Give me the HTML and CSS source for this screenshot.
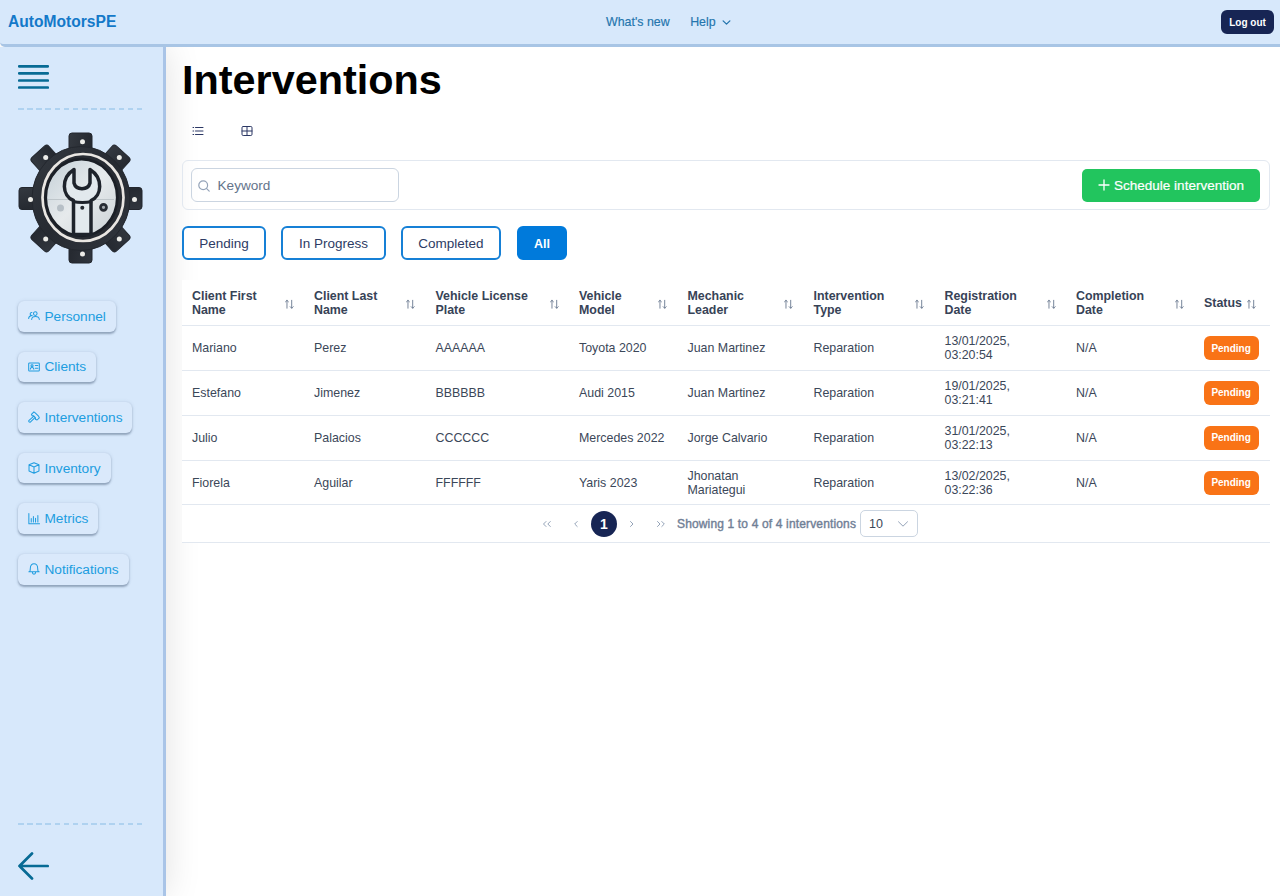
FILE: index.html
```html
<!DOCTYPE html>
<html lang="en">
<head>
<meta charset="utf-8">
<title>AutoMotorsPE</title>
<link rel="stylesheet" href="styles.css">
</head>
<body>
<svg class="defs" width="0" height="0">
  <symbol id="sort" viewBox="0 0 12 12"><path d="M3.400 10.500v-9M1.700 3.200l1.700-1.700 1.700 1.700M8.800 1.500v9M7.100 8.800l1.700 1.700 1.700-1.700"/></symbol>
  <symbol id="chev" viewBox="0 0 12 12"><path d="M1.500 3.800L6 8.200l4.500-4.400"/></symbol>
</svg>
<header class="topbar">
  <a class="brand">AutoMotorsPE</a>
  <nav class="topnav"><a>What's new</a><a>Help <svg class="icon help-chev"><use href="#chev"/></svg></a></nav>
  <button class="logout">Log out</button>
</header>
<div class="layout">
  <aside class="sidebar">
    <svg class="burger" viewBox="0 0 31 26"><path d="M1.200 2.300h28.600M1.200 9.300h28.600M1.200 16.500h28.600M1.200 23.500h28.600"/></svg>
    <div class="dashes"></div>
    <svg class="logo" viewBox="0 0 126 134">
      <defs>
        <linearGradient id="steel" x1="0" y1="0" x2="1" y2="1"><stop offset="0" stop-color="#343940"/><stop offset=".5" stop-color="#262a31"/><stop offset="1" stop-color="#31363e"/></linearGradient>
        <linearGradient id="face" x1="0" y1="0" x2="1" y2="1"><stop offset="0" stop-color="#c3cfd7"/><stop offset=".5" stop-color="#e6eaec"/><stop offset="1" stop-color="#cbd2d6"/></linearGradient>
      </defs>
      <g fill="url(#steel)" stroke="#23272e" stroke-width="1">
        <rect x="51" y="1" width="23" height="130" rx="3"/>
        <rect x="1" y="55.500" width="123" height="22" rx="3"/>
        <rect x="51" y="3.500" width="23" height="126" rx="3" transform="rotate(42 62.500 66.500)"/>
        <rect x="51" y="3.500" width="23" height="126" rx="3" transform="rotate(-42 62.500 66.500)"/>
        <ellipse cx="63" cy="66.500" rx="49" ry="52"/>
      </g>
      <ellipse cx="65" cy="65.500" rx="40.500" ry="43.500" fill="#272b32" stroke="#e9e6e2" stroke-width="2.700"/>
      <ellipse cx="63.500" cy="65.500" rx="35.800" ry="38.300" fill="url(#face)" stroke="#1b1f26" stroke-width="2.800"/>
      <path d="M30 67.500h66" stroke="#b2babf" stroke-width=".7"/>
      <path d="M55.500 102.500V68.500C44 64 42.500 46 56 37.500V51c2 7.500 14 7.500 16 0V37.500C85.500 46 84 64 73 68.500V102.500z" fill="#e2e9ed" stroke="#1e232b" stroke-width="3.500" stroke-linejoin="round"/>
      <path d="M54.500 69.500q10 2 19.500 0" fill="none" stroke="#1e232b" stroke-width="3.200"/>
      <circle cx="64.300" cy="75.700" r="2" fill="#242930"/>
      <circle cx="42.500" cy="76" r="3.500" fill="#9faab4" opacity=".65"/>
      <circle cx="85.500" cy="75.300" r="3" fill="#a2a8ad" stroke="#272c33" stroke-width="2.700"/>
      <g fill="#ecece8"><circle cx="64.500" cy="9.700" r="2.500"/><circle cx="64.500" cy="122" r="2.500"/><circle cx="12.500" cy="67.500" r="2.500"/><circle cx="116.500" cy="67.500" r="2.500"/><circle cx="27.700" cy="25.500" r="2.500"/><circle cx="101.300" cy="25.500" r="2.500"/><circle cx="27.700" cy="107" r="2.500"/><circle cx="101.300" cy="107" r="2.500"/></g>
    </svg>
    <nav class="menu">
      <a><svg class="icon" viewBox="0 0 14 14"><circle cx="8.500" cy="4.200" r="2.100"/><path d="M4.300 11c.3-4.500 8.400-4.500 8.900 0M4.500 3a1.700 1.700 0 1 0 .3 3.300M.8 10c0-2.300 1.200-3.200 3-3.300"/></svg>Personnel</a>
      <a><svg class="icon" viewBox="0 0 14 14"><rect x=".8" y="2.300" width="12.400" height="9.400" rx="1"/><circle cx="4.700" cy="5.500" r="1.200"/><path d="M2.600 9.500c.2-2.400 4-2.400 4.200 0M8.500 5.300h3M8.500 8.500h3"/></svg>Clients</a>
      <a><svg class="icon" viewBox="0 0 14 14"><path d="M4 3.900L6.900 1l1.500 1.100 3.900 3.900.9 1.900-2.600 2.600-2-.9.200-1.600-2.400-2.500-1.600.1zM6.200 6.500L.9 11.300q-.2 2 1.800 1.700l5.100-5"/></svg>Interventions</a>
      <a><svg class="icon" viewBox="0 0 14 14"><path d="M7 .9l5.800 2.300v7.300L7 13.100l-5.800-2.600V3.200zM1.300 3.300L7 5.900l5.700-2.600M7 5.900v7.200"/></svg>Inventory</a>
      <a><svg class="icon" viewBox="0 0 14 14"><path d="M1 .7v11.800h12.500M3.800 6.500v4M6.300 4v6.500M8.800 6v4.500M11.500 2.800v7.700"/></svg>Metrics</a>
      <a><svg class="icon" viewBox="0 0 14 14"><path d="M1 10.300c1.700-.2 1.700-2 1.700-4C2.700 2.700 4.600.8 7 .8s4.300 1.900 4.300 5.500c0 2 0 3.800 1.700 4zM5 10.500c.2 3.500 3.800 3.500 4 0"/></svg>Notifications</a>
    </nav>
    <div class="side-foot">
      <div class="dashes"></div>
      <svg class="back" viewBox="0 0 31 28"><path d="M29.700 14H1.500M14 1.500L1.500 14 14 26.500"/></svg>
    </div>
  </aside>
  <main class="content">
    <h1>Interventions</h1>
    <div class="views">
      <svg class="icon" viewBox="0 0 12 12"><path d="M3.500 2.500h7.500M3.500 6h7.500M3.500 9.500h7.500M1 2.500h.7M1 6h.7M1 9.500h.7"/></svg>
      <svg class="icon" viewBox="0 0 12 12"><rect x="1" y="1.500" width="10" height="9" rx="1.200"/><path d="M6 1.500v9M1 6h10"/></svg>
    </div>
    <div class="toolbar">
      <label class="search"><svg class="icon" viewBox="0 0 12 12"><circle cx="5.200" cy="5.200" r="4.400"/><path d="M8.400 8.400l2.800 2.800"/></svg><span>Keyword</span></label>
      <button class="schedule"><svg class="icon" viewBox="0 0 12 12"><path d="M6 1v10M1 6h10"/></svg>Schedule intervention</button>
    </div>
    <div class="filters"><button class="f1">Pending</button><button class="f2">In Progress</button><button class="f3">Completed</button><button class="f4 active">All</button></div>
    <table>
      <colgroup><col class="c1"><col class="c2"><col class="c3"><col class="c4"><col class="c5"><col class="c6"><col class="c7"><col class="c8"><col class="c9"></colgroup>
      <thead><tr>
        <th><div>Client First<br>Name<svg class="icon"><use href="#sort"/></svg></div></th>
        <th><div>Client Last<br>Name<svg class="icon"><use href="#sort"/></svg></div></th>
        <th><div>Vehicle License<br>Plate<svg class="icon"><use href="#sort"/></svg></div></th>
        <th><div>Vehicle<br>Model<svg class="icon"><use href="#sort"/></svg></div></th>
        <th><div>Mechanic<br>Leader<svg class="icon"><use href="#sort"/></svg></div></th>
        <th><div>Intervention<br>Type<svg class="icon"><use href="#sort"/></svg></div></th>
        <th><div>Registration<br>Date<svg class="icon"><use href="#sort"/></svg></div></th>
        <th><div>Completion<br>Date<svg class="icon"><use href="#sort"/></svg></div></th>
        <th><div>Status<svg class="icon"><use href="#sort"/></svg></div></th>
      </tr></thead>
      <tbody>
        <tr><td>Mariano</td><td>Perez</td><td>AAAAAA</td><td>Toyota 2020</td><td>Juan Martinez</td><td>Reparation</td><td>13/01/2025,<br>03:20:54</td><td>N/A</td><td><span class="tag">Pending</span></td></tr>
        <tr><td>Estefano</td><td>Jimenez</td><td>BBBBBB</td><td>Audi 2015</td><td>Juan Martinez</td><td>Reparation</td><td>19/01/2025,<br>03:21:41</td><td>N/A</td><td><span class="tag">Pending</span></td></tr>
        <tr><td>Julio</td><td>Palacios</td><td>CCCCCC</td><td>Mercedes 2022</td><td>Jorge Calvario</td><td>Reparation</td><td>31/01/2025,<br>03:22:13</td><td>N/A</td><td><span class="tag">Pending</span></td></tr>
        <tr><td>Fiorela</td><td>Aguilar</td><td>FFFFFF</td><td>Yaris 2023</td><td>Jhonatan<br>Mariategui</td><td>Reparation</td><td>13/02/2025,<br>03:22:36</td><td>N/A</td><td><span class="tag">Pending</span></td></tr>
      </tbody>
    </table>
    <div class="pager">
      <span class="step"><svg class="icon" viewBox="0 0 12 12"><path d="M5 3.500L2.500 6 5 8.500M9.300 3.500L6.800 6l2.500 2.500"/></svg></span>
      <span class="step"><svg class="icon" viewBox="0 0 12 12"><path d="M7.200 3.500L4.700 6l2.500 2.500"/></svg></span>
      <span class="page">1</span>
      <span class="step"><svg class="icon" viewBox="0 0 12 12"><path d="M4.500 3.500L7 6 4.500 8.500"/></svg></span>
      <span class="step"><svg class="icon" viewBox="0 0 12 12"><path d="M2.500 3.500L5 6 2.500 8.500M6.800 3.500L9.300 6 6.800 8.500"/></svg></span>
      <span class="report">Showing 1 to 4 of 4 interventions</span>
      <span class="rows">10<svg class="icon"><use href="#chev"/></svg></span>
    </div>
  </main>
</div>
</body>
</html>
```
FILE: styles.css
```css
* { box-sizing: border-box; }
body { margin: 0; height: 896px; overflow: hidden; background: #fff; font-family: "Liberation Sans", Arial, sans-serif; color: #374357; display: flex; flex-direction: column; }
button { font-family: inherit; margin: 0; }
.defs { position: absolute; }
.icon { width: 12px; height: 12px; fill: none; stroke: currentColor; stroke-width: 1; stroke-linecap: round; stroke-linejoin: round; flex: none; }
.topbar { position: relative; z-index: 2; height: 47px; flex: none; padding: 0 6px 0 8px; background: #d7e8fb; border-bottom: 3px solid #a8c5e5; border-bottom-left-radius: 5px; display: grid; grid-template-columns: 598px auto 1fr; align-items: center; }
.brand { font-size: 15.600px; font-weight: bold; color: #1479c9; }
.topnav { display: flex; gap: 20.500px; font-size: 12.400px; color: #2475ad; -webkit-text-stroke: .15px #2475ad; }
.topnav a { display: flex; align-items: center; gap: 6px; }
.help-chev { width: 9px; height: 9px; stroke-width: 1.700; }
.logout { justify-self: end; width: 53px; height: 24px; padding: 0; border: 0; border-radius: 6px; background: #172554; color: #fff; font-size: 10px; font-weight: bold; }
.layout { display: flex; flex: 1; min-height: 0; }
.sidebar { width: 166px; flex: none; padding: 17px 20px 16px 18px; background: #d7e8fb; border-right: 3px solid #a9c4e7; box-shadow: 0 0 34px rgba(0,0,0,.12); display: flex; flex-direction: column; }
.burger { width: 31px; height: 26px; flex: none; fill: none; stroke: #076b95; stroke-width: 2.700; stroke-linecap: round; }
.dashes { flex: none; height: 2px; width: 125px; background: repeating-linear-gradient(90deg, #afd2f0 0 5.500px, transparent 5.500px 9.150px); }
.burger + .dashes { margin-top: 18px; }
.logo { width: 126px; height: 134px; margin-top: 22px; flex: none; }
.menu { margin-top: 35px; display: flex; flex-direction: column; align-items: flex-start; gap: 20px; }
.menu a { height: 30.600px; padding: 0 10px; display: flex; align-items: center; gap: 4.500px; border-radius: 6px; font-size: 13.700px; color: #209de0; background: #dae9fb; box-shadow: 0 1.500px 2px rgba(60,80,110,.42), 0 0 4px rgba(60,80,110,.1); letter-spacing: -.03px; }
.menu .icon { width: 12px; height: 12px; stroke-width: 1.200; }
.side-foot { margin-top: auto; }
.back { display: block; width: 31px; height: 28px; margin-top: 27px; fill: none; stroke: #076b95; stroke-width: 2.700; stroke-linecap: round; stroke-linejoin: round; }
.content { flex: 1; min-width: 0; padding: 9px 10px 0 16px; }
h1 { margin: 0; font-size: 41.400px; line-height: 48px; color: #000; }
.views { display: flex; gap: 37px; padding: 21px 10px 0; color: #2b3764; }
.views .icon { display: block; }
.toolbar { margin-top: 23px; height: 50px; padding: 0 9px 0 8px; border: 1px solid #e2e8f0; border-radius: 6px; display: flex; align-items: center; justify-content: space-between; }
.search { width: 208px; height: 34px; padding: 1px 6px 0; border: 1px solid #cbd5e1; border-radius: 6px; display: flex; align-items: center; gap: 7.500px; font-size: 13.600px; color: #64748b; }
.search .icon { color: #94a3b8; stroke-width: 1.200; }
.schedule { width: 178px; height: 33px; padding: 0; border: 0; border-radius: 5px; background: #22c55e; color: #fff; font-size: 13.500px; display: flex; align-items: center; justify-content: center; gap: 4px; -webkit-text-stroke: .2px #fff; }
.schedule .icon { stroke-width: 1.300; }
.filters { display: flex; gap: 15px; margin-top: 16px; }
.filters button { height: 34px; padding: 0; background: #fff; border: 2px solid #1680d6; border-radius: 6px; color: #2d3b64; font-size: 13.500px; }
.filters .f1 { width: 84px; }
.filters .f2 { width: 105px; }
.filters .f3 { width: 100px; }
.filters .f4 { width: 50px; margin-left: 1px; }
.filters .active { background: #007adb; border-color: #007adb; color: #fff; font-weight: bold; font-size: 12.500px; padding-top: 1px; }
table { width: 1088px; margin-top: 20px; border-collapse: separate; border-spacing: 0; table-layout: fixed; font-size: 12.400px; line-height: 14px; background: #fff; }
.c1 { width: 122px; }
.c2 { width: 121.500px; }
.c3 { width: 143.500px; }
.c4 { width: 108.500px; }
.c5 { width: 126px; }
.c6 { width: 131px; }
.c7 { width: 131.500px; }
.c8 { width: 128px; }
.c9 { width: 76px; }
th, td { padding: 0 0 0 10px; text-align: left; vertical-align: middle; border-bottom: 1px solid #e2e8f0; white-space: nowrap; }
th { height: 46.300px; }
th div { position: relative; padding-right: 10px; }
th .icon { position: absolute; width: 10.500px; height: 10.500px; right: 10px; top: 50%; margin-top: -4px; color: #64748b; }
th:last-child .icon { right: 14px; }
td { height: 44.800px; color: #3b4759; }
.tag { display: flex; width: 55px; height: 24px; margin-left: -.4px; padding-top: 1px; align-items: center; justify-content: center; border-radius: 6px; background: #f97316; color: #fff; font-size: 10px; font-weight: bold; }
.pager { height: 38px; padding-left: 356px; border-bottom: 1px solid #e2e8f0; display: flex; align-items: center; background: #fff; font-size: 12px; color: #718096; }
.step { width: 18px; display: flex; justify-content: center; color: #94a3b8; margin-right: 10.500px; }
.page { width: 26px; height: 26px; margin-right: 6px; margin-left: -4px; border-radius: 50%; background: #172554; color: #fff; display: flex; align-items: center; justify-content: center; font-size: 14px; font-weight: bold; }
.report { margin-left: -3px; width: 180.500px; white-space: nowrap; letter-spacing: .15px; -webkit-text-stroke: .4px #718096; }
.rows { margin-left: 2.500px; width: 58px; height: 27px; padding: 0 8px; border: 1px solid #cbd5e1; border-radius: 5px; display: flex; align-items: center; justify-content: space-between; color: #3b4759; font-size: 12.500px; }
.rows .icon { color: #94a3b8; }
```
